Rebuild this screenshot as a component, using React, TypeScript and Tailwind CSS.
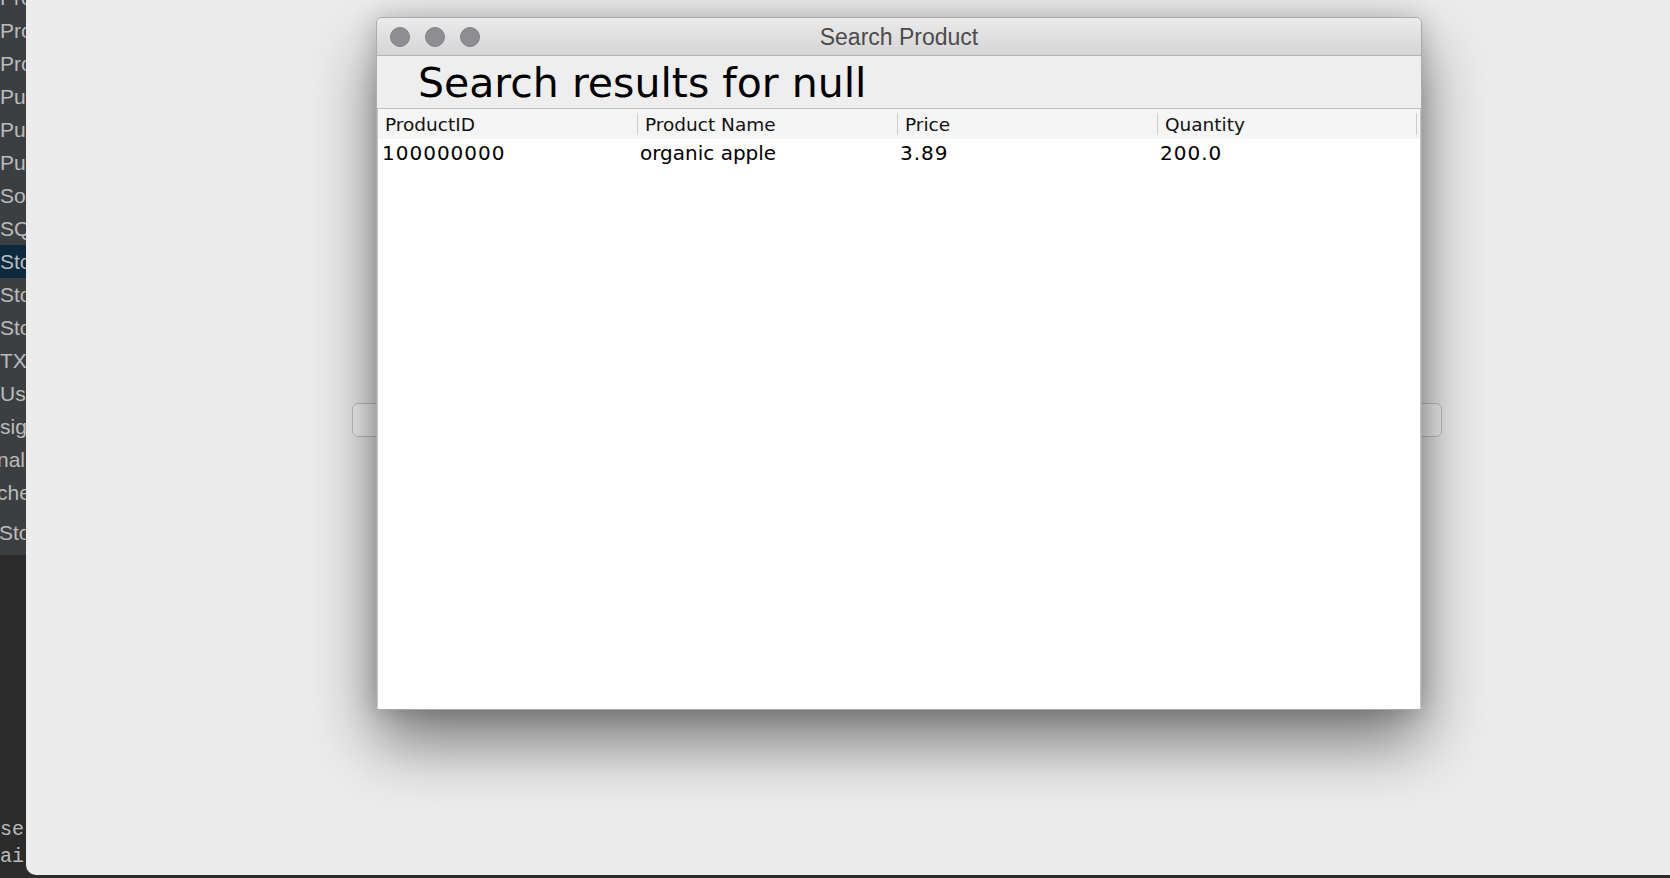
import React from "react";

const projectItems = [
  "ProductDAO",
  "ProductInfo",
  "ProductSearch",
  "Purchase",
  "PurchaseDAO",
  "PurchaseItem",
  "SocketServer",
  "SQLHelper",
  "Store",
  "StoreDAO",
  "StoreItem",
  "TXManager",
  "User",
  "signup",
  "nal",
  "che",
];

const columns = ["ProductID", "Product Name", "Price", "Quantity"];
const rows = [["100000000", "organic apple", "3.89", "200.0"]];

const Sidebar = () => (
  <div className="w-[26px] h-full flex flex-col overflow-hidden bg-[#3c3f41] text-[#bbbbbb] font-['Liberation_Sans',sans-serif] text-[21px] whitespace-nowrap">
    {/* Project tree */}
    <div className="-mt-[19px] flex flex-col">
      {projectItems.map((item, index) => (
        <div
          key={index}
          className={
            "h-[33px] leading-[33px] " +
            (index === 8 ? "bg-[#0d293e]" : "")
          }
        >
          <span className={index === 14 || index === 15 ? "-ml-[3px] inline-block" : ""}>
            {item}
          </span>
        </div>
      ))}
    </div>
    <div className="h-px bg-[#2b2b2b]"></div>
    <div className="h-[46px] leading-[48px] -ml-[1px]">StoreApp</div>

    {/* Console */}
    <div className="flex-1 bg-[#2b2b2b] pt-[261px] font-['Liberation_Mono',monospace] text-[20px]">
      <div className="h-[27px] leading-[27px]">se</div>
      <div className="h-[27px] leading-[27px]">ai</div>
      <div className="h-[27px] leading-[27px]">us</div>
    </div>
  </div>
);

const SearchDialog = () => (
  <div className="absolute left-[350px] top-[17px] w-[1046px] h-[693px] flex flex-col rounded-t-[6px] rounded-b-[4px] border border-[#ababab] bg-[#eeeeee] overflow-hidden shadow-[0_32px_65px_rgba(0,0,0,0.5),0_0_24px_rgba(0,0,0,0.18)]">
    {/* Title bar */}
    <div className="relative h-[38px] shrink-0 flex items-center border-b border-[#b3b3b3] bg-linear-to-b from-[#ebebeb] to-[#d5d5d5]">
      <div className="flex gap-[15px] pl-[13px] pt-[1px]">
        <div className="w-[20px] h-[20px] rounded-full bg-[#8e8e92] border border-[#828286]"></div>
        <div className="w-[20px] h-[20px] rounded-full bg-[#8e8e92] border border-[#828286]"></div>
        <div className="w-[20px] h-[20px] rounded-full bg-[#8e8e92] border border-[#828286]"></div>
      </div>
      <div className="absolute inset-0 pt-[2px] flex items-center justify-center text-[23px] text-[#4b4b4b] font-['Liberation_Sans',sans-serif]">
        Search Product
      </div>
    </div>

    {/* Heading */}
    <div className="h-[53px] shrink-0 pt-[7px] pl-[41px] border-b border-[#c2c2c2] bg-[#eeeeee]">
      <div className="text-[41px] leading-[40px] text-black font-['DejaVu_Sans',sans-serif]">
        Search results for null
      </div>
    </div>

    {/* Table */}
    <div className="flex-1 bg-white border-x border-[#c4c4c4] font-['DejaVu_Sans',sans-serif]">
      <div className="grid grid-cols-[260px_260px_260px_259px_1fr] h-[30px] bg-[#f5f5f5]">
        {columns.map((col) => (
          <div key={col} className="flex items-center">
            <div className="flex-1 pl-[7px] pt-[2px] text-[18.5px] leading-[28px] text-[#111111]">{col}</div>
            <div className="w-px h-[22px] bg-[#cdcdcd]"></div>
          </div>
        ))}
        <div></div>
      </div>
      {rows.map((row, r) => (
        <div key={r} className="grid grid-cols-[260px_260px_260px_259px_1fr] h-[28px]">
          {row.map((cell, c) => (
            <div
              key={c}
              className={
                "text-[20px] leading-[28px] text-black " +
                (c === 0 ? "pl-[4px] " : "pl-[2px] ") +
                (c === 1 ? "" : "tracking-[1px]")
              }
            >
              {cell}
            </div>
          ))}
          <div></div>
        </div>
      ))}
    </div>
  </div>
);

const App = () => {
  return (
    <div className="w-[1670px] h-[878px] flex overflow-hidden bg-[#2b2b2b]">
      <Sidebar />

      {/* Desktop / parent frame */}
      <div className="relative flex-1 h-[875px] bg-[#ececec] rounded-bl-[10px]">
        <div className="pt-[403px] pl-[326px]">
          <div className="w-[1090px] h-[34px] rounded-[6px] border border-[#c3c3c3] bg-[#f4f4f4]"></div>
        </div>
        <SearchDialog />
      </div>
    </div>
  );
};

export default App;
